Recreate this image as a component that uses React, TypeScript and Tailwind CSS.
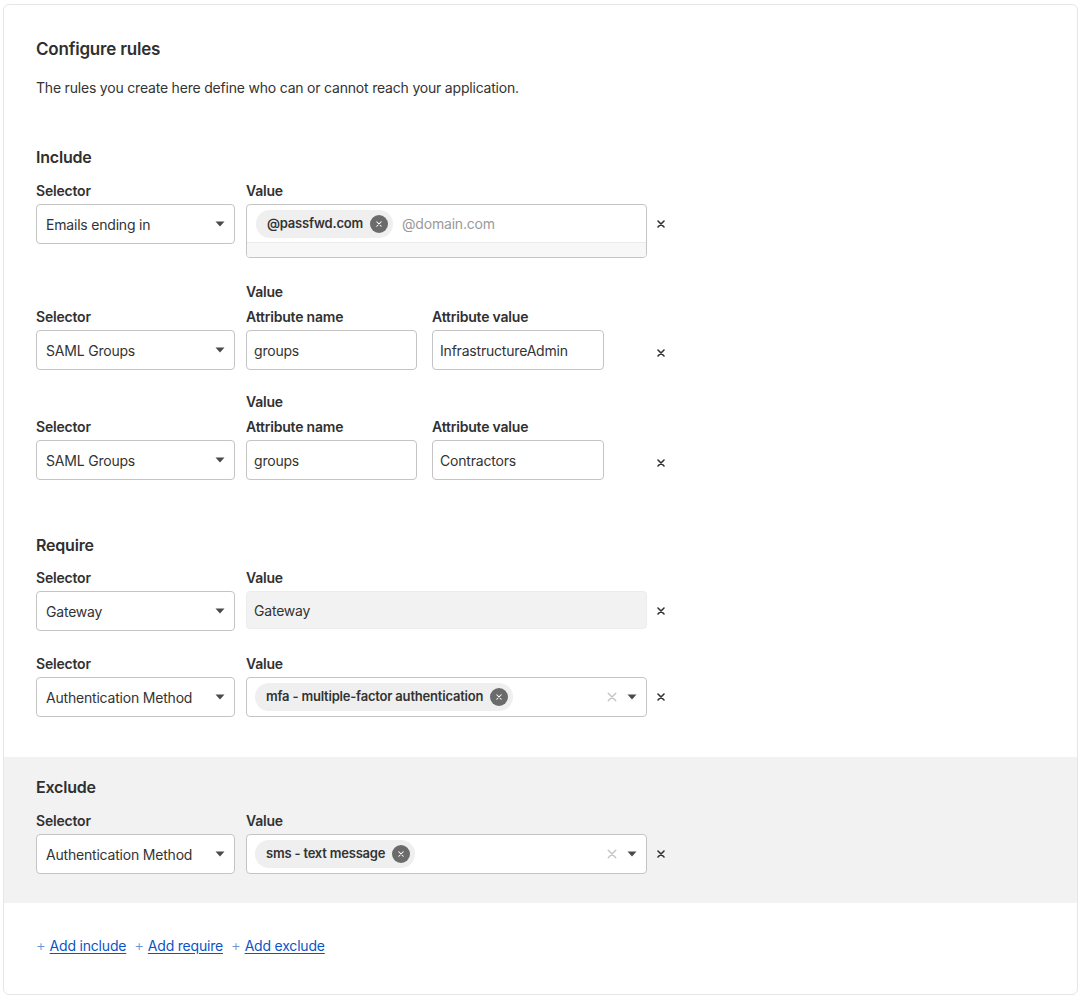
import React from "react";

const font = { fontFamily: "Inter, 'Liberation Sans', sans-serif", letterSpacing: "-0.2px" };

function Caret() {
  return (
    <svg width="10" height="6" viewBox="0 0 10 6" className="shrink-0">
      <path d="M0.5 0.5 L9.5 0.5 L5 5.5 Z" fill="#4a4a4a" />
    </svg>
  );
}

function Cross({ size = 8, color = "#333", width = 1.6 }: { size?: number; color?: string; width?: number }) {
  return (
    <svg width={size} height={size} viewBox="0 0 8 8" className="shrink-0">
      <path d="M1 1 L7 7 M7 1 L1 7" stroke={color} strokeWidth={width} strokeLinecap="round" />
    </svg>
  );
}

// x button sits 14px right of the value column
function Remove({ offset = "mt-[23px]" }: { offset?: string }) {
  return (
    <div className={`flex h-[40px] w-[28px] shrink-0 items-center justify-center ${offset}`}>
      <Cross />
    </div>
  );
}

function Chip({ label }: { label: string }) {
  return (
    <span className="inline-flex h-[28px] shrink-0 items-center gap-[7px] rounded-full bg-[#efefef] pl-[11px] pr-[5px] text-[13px] font-semibold text-[#333]">
      {label}
      <span className="flex h-[18px] w-[18px] shrink-0 items-center justify-center rounded-full bg-[#6b6b6b]">
        <Cross size={6} color="#fff" width={1.4} />
      </span>
    </span>
  );
}

function Label({ children }: { children: React.ReactNode }) {
  return <div className="h-[20px] text-[14px] font-semibold leading-[20px] text-[#313131]">{children}</div>;
}

function Select({ value }: { value: string }) {
  return (
    <div className="flex h-[40px] w-[199px] items-center justify-between rounded-[4px] border border-[#c4c4c4] bg-white pl-[9px] pr-[9px] text-[14px] text-[#333]">
      <span>{value}</span>
      <Caret />
    </div>
  );
}

function Input({ value, w }: { value: string; w: string }) {
  return (
    <div className={`flex h-[40px] items-center rounded-[4px] border border-[#c4c4c4] bg-white px-[7px] text-[14px] text-[#333] ${w}`}>
      {value}
    </div>
  );
}

function SelectorCol({ value }: { value: string }) {
  return (
    <div className="flex w-[199px] shrink-0 flex-col gap-[3px]">
      <Label>Selector</Label>
      <Select value={value} />
    </div>
  );
}

function SamlRow({ attr }: { attr: string }) {
  return (
    <div className="flex items-end">
      <SelectorCol value="SAML Groups" />
      <div className="ml-[11px] flex w-[401px] flex-col">
        <Label>Value</Label>
        <div className="mt-[5px] flex gap-[15px]">
          <div className="flex flex-col gap-[3px]">
            <Label>Attribute name</Label>
            <Input value="groups" w="w-[171px]" />
          </div>
          <div className="flex flex-col gap-[3px]">
            <Label>Attribute value</Label>
            <Input value={attr} w="w-[172px]" />
          </div>
        </div>
      </div>
      <div className="flex h-[40px] w-[28px] items-center justify-center pt-[5px]">
        <Cross />
      </div>
    </div>
  );
}

function MultiRow({ selector, chip }: { selector: string; chip: string }) {
  return (
    <div className="flex items-start">
      <SelectorCol value={selector} />
      <div className="ml-[11px] flex flex-col gap-[3px]">
        <Label>Value</Label>
        <div className="flex h-[40px] w-[401px] items-center rounded-[4px] border border-[#c4c4c4] bg-white pl-[8px] pr-[9px]">
          <Chip label={chip} />
          <div className="ml-auto flex items-center gap-[10px]">
            <Cross size={10} color="#c6c6c6" width={1.2} />
            <Caret />
          </div>
        </div>
      </div>
      <Remove />
    </div>
  );
}

export default function App() {
  return (
    <div className="min-h-[1000px] bg-white pl-[3px] pt-[4px]" style={font}>
      <div className="h-[991px] w-[1075px] rounded-[6px] border border-[#e6e6e6] bg-white">
        <div className="px-[32px] pt-[32px]">
          <h1 className="text-[17px] font-semibold leading-[24px] text-[#2f2f2f]">Configure rules</h1>
          <p className="mt-[17px] text-[14px] leading-[20px] text-[#333]">
            The rules you create here define who can or cannot reach your application.
          </p>

          {/* Include */}
          <h2 className="mt-[47px] text-[16px] font-semibold leading-[24px] text-[#2f2f2f]">Include</h2>
          <div className="mt-[12px] flex items-start">
            <SelectorCol value="Emails ending in" />
            <div className="ml-[11px] flex flex-col gap-[3px]">
              <Label>Value</Label>
              <div className="w-[401px] overflow-hidden rounded-[4px] border border-[#c4c4c4] bg-white">
                <div className="flex h-[37px] items-center gap-[9px] pl-[9px]">
                  <Chip label="@passfwd.com" />
                  <span className="text-[14px] text-[#9a9a9a]">@domain.com</span>
                </div>
                <div className="h-[15px] border-t border-[#ebebeb] bg-[#f7f7f7]" />
              </div>
            </div>
            <Remove />
          </div>

          <div className="mt-[24px] flex flex-col gap-[22px]">
            <SamlRow attr="InfrastructureAdmin" />
            <SamlRow attr="Contractors" />
          </div>

          {/* Require */}
          <h2 className="mt-[53px] text-[16px] font-semibold leading-[24px] text-[#2f2f2f]">Require</h2>
          <div className="mt-[11px] flex items-start">
            <SelectorCol value="Gateway" />
            <div className="ml-[11px] flex flex-col gap-[3px]">
              <Label>Value</Label>
              <div className="flex h-[38px] w-[401px] items-center rounded-[4px] border border-[#ececec] bg-[#f2f2f2] px-[7px] text-[14px] text-[#333]">
                Gateway
              </div>
            </div>
            <Remove />
          </div>
          <div className="mt-[23px]">
            <MultiRow selector="Authentication Method" chip="mfa - multiple-factor authentication" />
          </div>
        </div>

        {/* Exclude */}
        <div className="mt-[40px] bg-[#f2f2f2] px-[32px] pb-[29px] pt-[18px]">
          <h2 className="text-[16px] font-semibold leading-[24px] text-[#2f2f2f]">Exclude</h2>
          <div className="mt-[12px]">
            <MultiRow selector="Authentication Method" chip="sms - text message" />
          </div>
        </div>

        <div className="mt-[33px] flex items-center gap-[8px] px-[32px] text-[14px] leading-[20px]">
          {["Add include", "Add require", "Add exclude"].map((t) => (
            <span key={t} className="flex items-center gap-[4px]">
              <span className="text-[15px] font-light text-[#6b96d6]">+</span>
              <a href="#" className="text-[#0a55c6] underline underline-offset-2">
                {t}
              </a>
            </span>
          ))}
        </div>
      </div>
    </div>
  );
}
